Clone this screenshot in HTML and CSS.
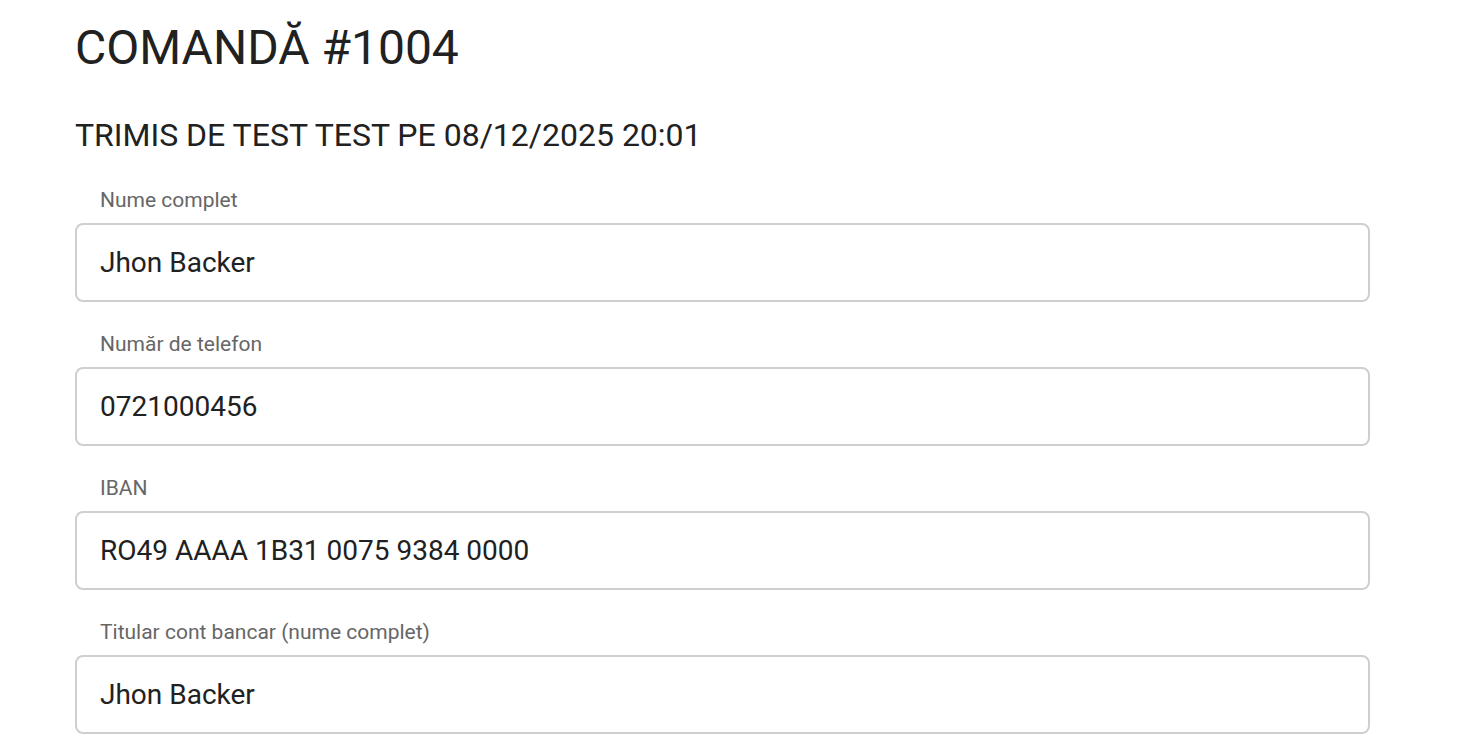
FILE: index.html
```html
<!DOCTYPE html>
<html lang="ro">
<head>
<meta charset="utf-8">
<title>Comandă #1004</title>
<link rel="stylesheet" href="styles.css">
</head>
<body>
<main class="page">
  <h1 class="title">COMANDĂ #1004</h1>
  <h2 class="subtitle">TRIMIS DE TEST TEST PE 08/12/2025 20:01</h2>
  <div class="field">
    <label class="label">Nume complet</label>
    <div class="input">Jhon Backer</div>
  </div>
  <div class="field">
    <label class="label">Număr de telefon</label>
    <div class="input">0721000456</div>
  </div>
  <div class="field">
    <label class="label">IBAN</label>
    <div class="input">RO49 AAAA 1B31 0075 9384 0000</div>
  </div>
  <div class="field">
    <label class="label">Titular cont bancar (nume complet)</label>
    <div class="input">Jhon Backer</div>
  </div>
</main>
</body>
</html>
```

FILE: styles.css
```css
html, body {
  margin: 0;
  padding: 0;
  background: #ffffff;
}
body {
  font-family: Roboto, "Liberation Sans", sans-serif;
  color: #212121;
}
.page {
  width: 1295px;
  padding: 20px 0 0 75px;
  display: flex;
  flex-direction: column;
}
.title {
  margin: 0;
  font-size: 48px;
  font-weight: 400;
  line-height: 56px;
  color: #212121;
}
.subtitle {
  margin: 40px 0 0 0;
  font-size: 32px;
  font-weight: 400;
  line-height: 38px;
  color: #212121;
}
.field {
  display: flex;
  flex-direction: column;
  margin-top: 34px;
}
.field + .field {
  margin-top: 30px;
}
.label {
  padding-left: 25px;
  font-size: 21px;
  line-height: 24px;
  color: #666666;
  margin-bottom: 11px;
}
.input {
  box-sizing: border-box;
  height: 79px;
  border: 2px solid #cfcfd2;
  border-radius: 8px;
  padding: 0 23px;
  display: flex;
  align-items: center;
  font-size: 28px;
  color: #212121;
}
```
